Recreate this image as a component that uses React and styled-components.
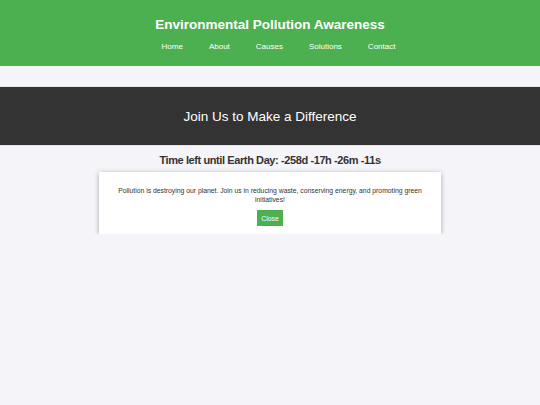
import React, { useState } from 'react';
import styled, { createGlobalStyle } from 'styled-components';

const GlobalStyle = createGlobalStyle`
    body {
        margin: 0;
        background: #f4f4f9;
        font-family: "Liberation Sans", Arial, sans-serif;
        color: #333;
    }
`;

const Header = styled.header`
    background: #4caf50;
    color: #fff;
    height: 66px;
    box-sizing: border-box;
    padding-top: 17px;
    text-align: center;
`;

const Title = styled.h1`
    margin: 0;
    font-size: 13.5px;
    line-height: 16px;
    font-weight: bold;
`;

const Nav = styled.nav`
    display: flex;
    justify-content: center;
    gap: 26px;
    margin-top: 9px;
    padding-left: 17px;
`;

const NavLink = styled.a`
    color: #fff;
    font-size: 8px;
    text-decoration: none;
    line-height: 10px;
`;

const Hero = styled.section`
    margin-top: 21px;
    height: 58px;
    background: #333;
    color: #fff;
    display: flex;
    align-items: center;
    justify-content: center;
    box-shadow: 0 0 1px rgba(0, 0, 0, 0.4);
`;

const HeroText = styled.h2`
    margin: 0;
    font-size: 13.5px;
    font-weight: normal;
`;

const Countdown = styled.h3`
    margin: 8px 0 0;
    font-size: 11px;
    letter-spacing: -0.4px;
    line-height: 14px;
    font-weight: bold;
    text-align: center;
`;

const Modal = styled.div`
    display: ${({ show }) => (show ? 'block' : 'none')};
    width: 342px;
    box-sizing: border-box;
    margin: 5px auto 0;
    padding: 15px 16px 8px;
    background: #fff;
    box-shadow: 0 1px 5px rgba(0, 0, 0, 0.3);
    text-align: center;
`;

const Message = styled.p`
    margin: 0 0 6px;
    font-size: 6.8px;
    line-height: 8.5px;
    color: #333;
`;

const CloseButton = styled.button`
    display: block;
    margin: 0 auto;
    background: #4caf50;
    color: #fff;
    border: none;
    font-family: inherit;
    font-size: 6.8px;
    width: 26px;
    height: 16px;
    padding: 0;
    cursor: pointer;
`;

const links = ['Home', 'About', 'Causes', 'Solutions', 'Contact'];

const App = () => {
    const [showModal, setShowModal] = useState(true);

    return (
        <>
            <GlobalStyle />
            <Header>
                <Title>Environmental Pollution Awareness</Title>
                <Nav>
                    {links.map((l) => (
                        <NavLink key={l} href="#">{l}</NavLink>
                    ))}
                </Nav>
            </Header>
            <Hero>
                <HeroText>Join Us to Make a Difference</HeroText>
            </Hero>
            <Countdown>Time left until Earth Day: -258d -17h -26m -11s</Countdown>
            <Modal show={showModal}>
                <Message>
                    Pollution is destroying our planet. Join us in reducing waste, conserving energy, and promoting green initiatives!
                </Message>
                <CloseButton onClick={() => setShowModal(false)}>Close</CloseButton>
            </Modal>
        </>
    );
};

export default App;
